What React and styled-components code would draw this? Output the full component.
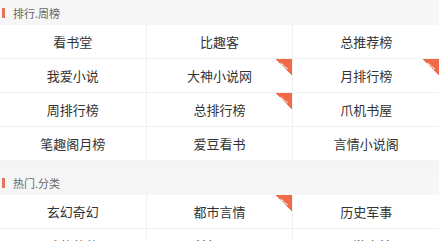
import React from "react";
import styled, { createGlobalStyle } from "styled-components";

const Global = createGlobalStyle`
  html, body { margin: 0; padding: 0; background: #f5f5f5; }
  body { font-family: "Noto Sans CJK SC", "Noto Sans", sans-serif; }
`;

const Page = styled.div`
  width: 439px;
  background: #f5f5f5;
`;

const SectionHead = styled.div`
  height: 25px;
  margin-top: ${(p) => (p.first ? "0" : "10px")};
  display: flex;
  align-items: center;
  background: #f6f6f6;
  color: #666;
  font-size: 11px;
`;

const Bar = styled.span`
  width: 3px;
  height: 10px;
  margin: 0 8px 0 2px;
  background: #e2765c;
`;

const Grid = styled.div`
  display: grid;
  grid-template-columns: repeat(3, 1fr);
  gap: 1px;
  background: #f0f0f0;
`;

const Cell = styled.div`
  position: relative;
  height: 33px;
  display: flex;
  align-items: center;
  justify-content: center;
  background: #fff;
  color: #333;
  font-size: 13px;
  overflow: hidden;
`;

const Hot = styled.span`
  position: absolute;
  top: 0;
  right: 0;
  width: 16px;
  height: 16px;
  background: linear-gradient(45deg, transparent 50%, #ee6a4b 50%);
`;

const HotText = styled.span`
  position: absolute;
  top: 3px;
  right: -2px;
  transform: rotate(45deg) scale(0.45);
  transform-origin: center;
  color: #fff;
  font-size: 10px;
  font-family: "Liberation Sans", sans-serif;
  font-weight: bold;
  line-height: 1;
`;

const sections = [
  {
    title: "排行.周榜",
    items: [
      ["看书堂"], ["比趣客"], ["总推荐榜"],
      ["我爱小说"], ["大神小说网", true], ["月排行榜", true],
      ["周排行榜"], ["总排行榜", true], ["爪机书屋"],
      ["笔趣阁月榜"], ["爱豆看书"], ["言情小说阁"],
    ],
  },
  {
    title: "热门.分类",
    items: [
      ["玄幻奇幻"], ["都市言情", true], ["历史军事"],
      ["武侠仙侠"], ["科幻灵异"], ["网游竞技"],
    ],
  },
];

export default function App() {
  return (
    <Page>
      <Global />
      {sections.map((s, i) => (
        <React.Fragment key={s.title}>
          <SectionHead first={i === 0}>
            <Bar />
            {s.title}
          </SectionHead>
          <Grid>
            {s.items.map(([name, hot]) => (
              <Cell key={name}>
                {name}
                {hot && (
                  <Hot>
                    <HotText>HOT</HotText>
                  </Hot>
                )}
              </Cell>
            ))}
          </Grid>
        </React.Fragment>
      ))}
    </Page>
  );
}
